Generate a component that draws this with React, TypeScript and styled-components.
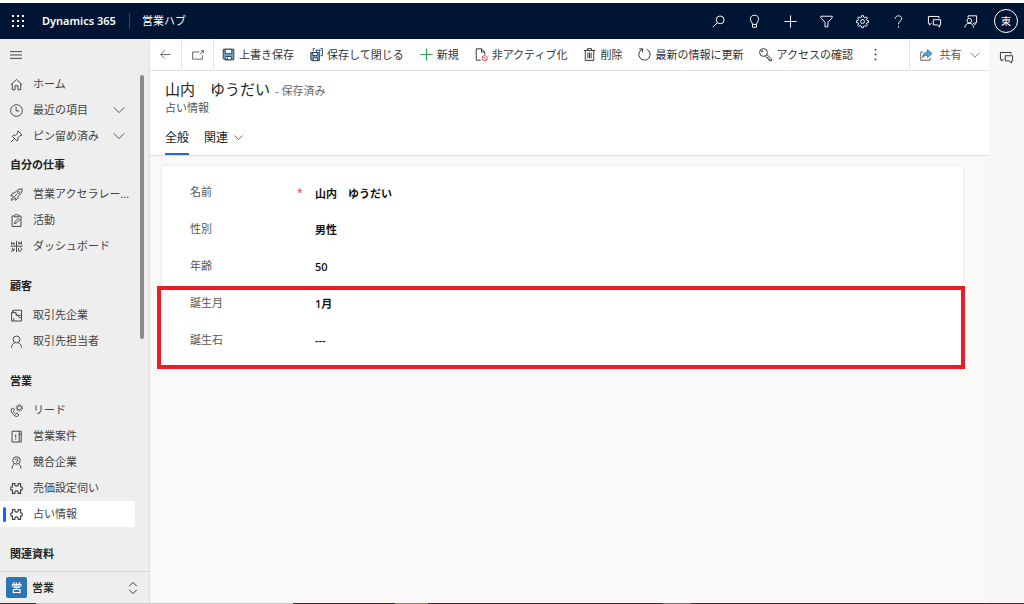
import React from "react";
import styled, { createGlobalStyle } from "styled-components";

const GlobalStyle = createGlobalStyle`
  *, *::before, *::after { box-sizing: border-box; }
  body {
    margin: 0;
    background: #faf9f8;
    color: #333;
    font-family: "Open Sans", "Noto Sans CJK JP", sans-serif;
    font-size: 11px;
    line-height: 16px;
  }
  button, input, select { font: inherit; color: inherit; }
  button { background: none; border: 0; padding: 0; cursor: pointer; white-space: nowrap; }
  a { color: inherit; text-decoration: none; }
  h1, h2, p, ul { margin: 0; padding: 0; font-size: inherit; font-weight: inherit; }
  ul { list-style: none; }
`;

/* ---------- icons ---------- */

const Svg = styled.svg<{ $size: number }>`
  width: ${(p) => p.$size}px;
  height: ${(p) => p.$size}px;
  flex: none;
  display: block;
  fill: none;
  stroke: currentColor;
  stroke-width: 1.2;
  overflow: visible;
`;

const shapes: Record<string, React.ReactNode> = {
  menu: <path d="M0 3.5h16M0 8h16M0 12.5h16" />,
  home: <path d="M1 8.2 8 1.8l7 6.4M2.8 7v7.4h3.4V9.6h3.6v4.8h3.4V7" />,
  clock: <><circle cx="8" cy="8" r="7.2" /><path d="M7.5 3.5v5h4" /></>,
  pin: <path d="M9.8 1.2l5 5-1.4.7-.8-.2-3 3 .2 2.6-1.2 1.2-5.8-5.8L4 6.5l2.6.2 3-3-.2-.9zM5.6 10.4 1 15" />,
  rocket: <><path d="M15 1c-4 0-6.500 1.500-9 5L3 6.500 1 9.500l3 .3L6.200 12l.3 3 3-2 .5-3c3.500-2.500 5-5 5-9zM4 11.500c-1.500.5-2.200 1.700-2.400 3.500 1.700-.2 2.800-.8 3.400-2.400" /><circle cx="10.500" cy="5.500" r="1.300" /><path d="M5.500 10.500l3-3" /></>,
  clipboard: <path d="M5.500 2.500H2.500v12.800h11V2.500h-3M5.500 1.500c.2-1 4.800-1 5 0v2h-5zM5.500 12l.6-2.600 4-4 1.800 1.700-4 4.100z" />,
  dashboard: <path d="M8 1v14M.5 7.500h15M2 2v3.500M5 3v2.500M11 2v3.500M14 1.500v4M2 4.500h4M10 4h4.500M3 9.500v2.500h2M1.500 13.500c2 1.200 3.500 0 4-3M10.500 10v3.500h3.500M12 9.500c2 0 3 1.500 2.500 3" />,
  account: <path d="M2 14.800V4.500L4 1.500h10.200v13.300zM2 4.500h5.500v3.200h6.700M4 1.500v3M7.500 6l3.500 4 3 1M4.500 14.500v-3" />,
  person: <><circle cx="8" cy="5.500" r="4.200" /><path d="M1.800 15.500c.2-3.500 2.200-5.300 4.200-6M14.200 15.500c-.2-3.500-2.200-5.300-4.200-6" /></>,
  lead: <><path d="M3.500 5 1.500 6.200C.3 8.500 4 14.500 7.800 15.300c1.500.2 2.700-.8 3.200-1.800L8.500 11.300 7 12.200C5.800 11.600 4.500 9.800 4.200 8.600L5.500 7.500z" /><circle cx="11.500" cy="4.800" r="2.500" /><circle cx="11.500" cy="4.800" r="3.900" strokeDasharray="1.600 1.100" /></>,
  opportunity: <path d="M2.500 1.500h8.800v13.300H2.500zM11.300 1.500h2.500v4h-2.500M13.800 5.500v9.300h-2.500M7 5.500v4M7 10.700v1.300" />,
  competitor: <><circle cx="8" cy="5.500" r="4.600" /><path d="M6.300 4.800c0-2 3.400-2 3.400 0 0 1.400-1.700 1.200-1.700 2.600M8 8v.8M2.500 15.500c0-2.500 1-4.500 3-6M13.500 15.500c0-2.500-1-4.500-3-6" /></>,
  puzzle: <path strokeWidth="1.400" d="M3 2h3c-.5 2 .5 3 2 3s2.500-1 2-3h3v4c3-.5 3 4.500 0 4v4h-3c.5-2-.5-3-2-3s-2.500 1-2 3H3v-4c-3 .5-3-4.500 0-4z" />,
  chevron: <path d="M1 4.500l7 7 7-7" />,
  updown: <path d="M3 5.500 8 .5l5 5M3 10.500l5 5 5-5" />,
  back: <path d="M15.500 8H1M7 2 1 8l6 6" />,
  popout: <path d="M9.500 4H.8v9.500h13V8.500M10.500 7l4.500-4.500M12 2.200h3.300v3.300" />,
  save: <><path fill="#6ba7d6" stroke="#333f4d" d="M1.500 1.500h13v13H3L1.500 13z" /><path fill="#fff" stroke="#333f4d" d="M4 1.500h8v5.500H4zM4.500 10.500h7v4h-7z" /><path stroke="#333f4d" d="M6.800 12v2.500" /></>,
  saveClose: <><path fill="#7fa5c2" stroke="#333f4d" d="M1 5.500h10.500v10H2.500L1 14.500z" /><path fill="#fff" stroke="#333f4d" d="M3.500 5.500h5.500v3.800H3.500zM4 12h5v3.500H4z" /><path stroke="#333f4d" d="M4 3.500V.5h2M13 .5h2.200v9H13" /><path stroke="#2376c4" d="M7 3h6M9 1 7 3l2 2M11 1l2 2-2 2" /></>,
  add: <path stroke="#2ea65a" strokeWidth="1.500" d="M8 .5v15M.5 8h15" />,
  deactivate: <><path d="M7 15H1.500V1H8l4 4v3M8 1v4h4" /><g stroke="#e8474f"><circle cx="12" cy="12.500" r="3.200" /><path d="M9.800 10.300l4.400 4.400" /></g></>,
  trash: <path d="M1 3h14M5.500 3V.8h5V3M2.800 3v12.300h10.400V3M6 5.500v7.300M8 5.500v7.300M10 5.500v7.300" />,
  refresh: <path d="M5.300 1.500A7 7 0 1 0 10.700 1.500M1.500 1h4v4.200" />,
  key: <><circle cx="5.500" cy="5.500" r="4.800" /><circle cx="4" cy="4" r=".8" /><path d="M9.500 8l6 5.500v2h-2.800v-1.800H11v-1.800H9.500L7.800 10" /></>,
  more: <g fill="currentColor" stroke="none"><circle cx="8" cy="2" r="1.100" /><circle cx="8" cy="8" r="1.100" /><circle cx="8" cy="14" r="1.100" /></g>,
  share: <><path d="M4.500 4H1v11h12.500v-3.500" /><path fill="#58a5e0" stroke="#1f6fb8" d="M10 1l6 5-6 5V8.200C7 8 5 9 3.500 11.500 4 7 6 4.200 10 4z" /></>,
  search: <><circle cx="10" cy="6" r="4.800" /><path d="M6.500 9.500 1 15" /></>,
  bulb: <path d="M5.500 11.500C5.500 9 3 8.500 3 5.300a5 5 0 0 1 10 0c0 3.200-2.500 3.700-2.500 6.200zM5.500 11.500V15h5v-3.500" />,
  plus: <path d="M8 .5v15M.5 8h15" />,
  filter: <path d="M1 1.500h14v1.800L9.800 9v5.500H6.200V9L1 3.300z" />,
  gear: <><circle cx="8" cy="8" r="2.400" /><path d="M6.900.8h2.200l.4 2 1.300.6 1.700-1.200 1.500 1.500-1.200 1.700.6 1.300 2 .4v2.200l-2 .4-.6 1.300 1.200 1.700-1.500 1.500-1.700-1.200-1.300.6-.4 2H6.900l-.4-2-1.300-.6-1.700 1.200L2 12.700 3.200 11l-.6-1.300-2-.4V7.100l2-.4.600-1.300L2 3.700l1.500-1.500 1.700 1.200 1.300-.6z" /></>,
  help: <path d="M4 4.500C4 -.2 12 -.2 12 4.500 12 7.500 8 7.500 8 11.500M8 13.700v1.800" />,
  chat: <path d="M4.500 10.200H4l-2.300 2.300v-2.300H.5V1.800h13V4M6.500 5.800h9v6.400H14v2.600l-2.600-2.600H6.500z" />,
  contact: <><path d="M5 3.500V1h10.500v8.500h-2v2.500L11 9.500" /><circle cx="6.500" cy="7" r="2.800" /><path d="M1 15.500c.3-3.500 2.500-5.300 5.500-5.300s5 1.800 5.300 5.300" /></>,
};

const Icon = ({ name, size = 13 }: { name: string; size?: number }) => (
  <Svg viewBox="0 0 16 16" $size={size} aria-hidden="true">{shapes[name]}</Svg>
);

/* ---------- frame ---------- */

const Page = styled.div`
  min-height: 100vh;
  display: flex;
  flex-direction: column;
  border-top: 3px solid #fff;
`;

const TopBar = styled.header`
  height: 36px;
  display: flex;
  align-items: center;
  background: #001433;
  color: #fff;
`;

const TopButton = styled.button`
  width: 36px;
  height: 36px;
  display: grid;
  place-items: center;
`;

const Brand = styled.span`
  padding: 0 13px 0 6px;
  font-family: "Noto Sans", sans-serif;
  font-weight: 600;
`;

const AppName = styled.span`
  padding-left: 12px;
  border-left: 1px solid #33435c;
`;

const TopActions = styled.div`
  display: flex;
  margin-left: auto;
`;

const Avatar = styled.span`
  width: 24px;
  height: 24px;
  display: grid;
  place-items: center;
  border: 1px solid #fff;
  border-radius: 50%;
  font-size: 10px;
`;

const Columns = styled.div`
  flex: 1;
  display: flex;
`;

const TaskbarEdge = styled.div`
  height: 1px;
  background: linear-gradient(
    90deg,
    #3a2d2f 0 3.5%, #c9c9c9 3.5% 28.6%, #3a2d2f 28.6% 38.6%,
    #b87a45 38.6% 41.8%, #3a2d2f 41.8% 64.7%, #7d7375 64.7% 67.500%, #3a2d2f 67.500%
  );
`;

/* ---------- site map ---------- */

const Sidebar = styled.nav`
  position: relative;
  width: 150px;
  flex: none;
  display: flex;
  flex-direction: column;
  background: #eee;
  border-right: 1px solid #e0e0e0;
`;

const MenuButton = styled.button`
  width: 32px;
  height: 32px;
  display: grid;
  place-items: center;
`;

const NavGroup = styled.section`
  & + & + & { margin-top: 11px; }
`;

const GroupTitle = styled.h2`
  padding: 8px 10px;
  color: #222;
  font-weight: 700;
`;

const NavLink = styled.a<{ $active?: boolean }>`
  position: relative;
  height: 26px;
  margin-right: 14px;
  padding-left: 10px;
  display: flex;
  align-items: center;
  gap: 10px;
  color: #444;
  background: ${(p) => (p.$active ? "#fff" : "transparent")};

  &::before {
    content: "";
    display: ${(p) => (p.$active ? "block" : "none")};
    position: absolute;
    left: 3px;
    top: 6px;
    bottom: 5px;
    width: 3px;
    border-radius: 2px;
    background: #0f62fe;
  }
`;

const NavText = styled.span`
  flex: 1;
  white-space: nowrap;
`;

const Expander = styled.span`
  margin-right: 10px;
`;

const ScrollThumb = styled.div`
  position: absolute;
  top: 36px;
  right: 5px;
  width: 4px;
  height: 264px;
  border-radius: 2px;
  background: #8a8a8a;
`;

const AreaSwitch = styled.button`
  height: 32px;
  margin-top: auto;
  padding: 0 10px 0 6px;
  display: flex;
  align-items: center;
  gap: 5px;
  border-top: 1px solid #d6d6d6;
  color: #222;
  font-weight: 500;
  text-align: left;
`;

const AreaBadge = styled.span`
  width: 21px;
  height: 21px;
  display: grid;
  place-items: center;
  border-radius: 2px;
  background: #2a76b5;
  color: #fff;
`;

/* ---------- record ---------- */

const Main = styled.main`
  flex: 1;
  min-width: 0;
  display: flex;
  flex-direction: column;
`;

const CommandBar = styled.div`
  height: 32px;
  display: flex;
  background: #fff;
  border-bottom: 1px solid #e1e1e1;
`;

const SquareButton = styled.button`
  width: 32px;
  display: grid;
  place-items: center;
  border-right: 1px solid #e1e1e1;
  color: #555;
`;

const Commands = styled.div`
  flex: 1;
  display: flex;
  align-items: center;
  gap: 16px;
  padding-left: 8px;
`;

const Command = styled.button`
  display: flex;
  align-items: center;
  gap: 4px;
`;

const ShareButton = styled.button`
  width: 80px;
  display: flex;
  align-items: center;
  justify-content: center;
  gap: 8px;
  border-left: 1px solid #e1e1e1;
  color: #555;
`;

const RecordHeader = styled.div`
  padding: 9px 15px 0;
  background: #fff;
  border-bottom: 1px solid #e1e1e1;
`;

const TitleRow = styled.div`
  display: flex;
  align-items: baseline;
  gap: 5px;
  line-height: 18px;
  color: #666;
`;

const Title = styled.h1`
  font-size: 15px;
  color: #222;
`;

const Entity = styled.p`
  color: #555;
`;

const Tabs = styled.div`
  display: flex;
  gap: 15px;
  margin-top: 8px;
`;

const Tab = styled.button<{ $active?: boolean }>`
  height: 31px;
  padding-bottom: 2px;
  display: flex;
  align-items: center;
  gap: 6px;
  border-bottom: 2px solid ${(p) => (p.$active ? "#2266e3" : "transparent")};
  color: #222;
  font-size: 12px;
`;

const Card = styled.form`
  position: relative;
  margin: 10px 26px 0 12px;
  padding: 7px 28px 8px;
  border-radius: 3px;
  background: #fff;
  box-shadow: 0 0 3px rgba(0, 0, 0, 0.12);
`;

const Field = styled.div`
  height: 37px;
  display: grid;
  grid-template-columns: 107px 18px 1fr;
  align-items: center;
`;

const Label = styled.label`
  color: #555;
`;

const Required = styled.span`
  color: #e8333c;
  font-size: 10px;
`;

const TextValue = styled.input`
  width: 100%;
  height: 18px;
  margin-top: 2px;
  padding: 0;
  border: 0;
  outline: 0;
  background: none;
  color: #111;
  font-weight: 600;
`;

const SelectValue = styled(TextValue).attrs({ as: "select" })`
  appearance: none;
`;

const Highlight = styled.div`
  position: absolute;
  top: 120px;
  bottom: -3px;
  left: -5px;
  right: -2px;
  border: 4px solid #ed1c24;
  pointer-events: none;
`;

const SideRail = styled.aside`
  width: 35px;
  flex: none;
  background: #f8f7f5;
`;

const RailButton = styled.button`
  width: 35px;
  height: 36px;
  display: grid;
  place-items: center;
`;

/* ---------- data ---------- */

type NavEntry = { icon: string; text: string; expands?: boolean; active?: boolean };

const groups: { title?: string; items: NavEntry[] }[] = [
  {
    items: [
      { icon: "home", text: "ホーム" },
      { icon: "clock", text: "最近の項目", expands: true },
      { icon: "pin", text: "ピン留め済み", expands: true },
    ],
  },
  {
    title: "自分の仕事",
    items: [
      { icon: "rocket", text: "営業アクセラレー..." },
      { icon: "clipboard", text: "活動" },
      { icon: "dashboard", text: "ダッシュボード" },
    ],
  },
  {
    title: "顧客",
    items: [
      { icon: "account", text: "取引先企業" },
      { icon: "person", text: "取引先担当者" },
    ],
  },
  {
    title: "営業",
    items: [
      { icon: "lead", text: "リード" },
      { icon: "opportunity", text: "営業案件" },
      { icon: "competitor", text: "競合企業" },
      { icon: "puzzle", text: "売価設定伺い" },
      { icon: "puzzle", text: "占い情報", active: true },
    ],
  },
  { title: "関連資料", items: [] },
];

const topIcons = [
  ["search", "検索"],
  ["bulb", "ヒント"],
  ["plus", "新規作成"],
  ["filter", "フィルター"],
  ["gear", "設定"],
  ["help", "ヘルプ"],
  ["chat", "チャット"],
  ["contact", "アシスタント"],
];

const commands = [
  ["save", "上書き保存"],
  ["saveClose", "保存して閉じる"],
  ["add", "新規"],
  ["deactivate", "非アクティブ化"],
  ["trash", "削除"],
  ["refresh", "最新の情報に更新"],
  ["key", "アクセスの確認"],
];

const fields = [
  { id: "name", label: "名前", value: "山内　ゆうだい", required: true },
  { id: "gender", label: "性別", value: "男性", choice: true },
  { id: "age", label: "年齢", value: "50" },
  { id: "month", label: "誕生月", value: "1月", choice: true },
  { id: "stone", label: "誕生石", value: "---" },
];

export default function App() {
  return (
    <Page>
      <GlobalStyle />
      <TopBar>
        <TopButton aria-label="アプリ一覧">
          <Svg viewBox="0 0 12 12" $size={12} aria-hidden="true">
            <path stroke="#fff" strokeWidth="2" strokeDasharray="2 3" d="M0 1h12M0 6h12M0 11h12" />
          </Svg>
        </TopButton>
        <Brand>Dynamics 365</Brand>
        <AppName>営業ハブ</AppName>
        <TopActions>
          {topIcons.map(([icon, label]) => (
            <TopButton key={icon} aria-label={label}><Icon name={icon} /></TopButton>
          ))}
          <TopButton><Avatar>東</Avatar></TopButton>
        </TopActions>
      </TopBar>

      <Columns>
        <Sidebar>
          <MenuButton aria-label="サイトマップ"><Icon name="menu" size={12} /></MenuButton>
          {groups.map((group, i) => (
            <NavGroup key={i}>
              {group.title && <GroupTitle>{group.title}</GroupTitle>}
              <ul>
                {group.items.map((item) => (
                  <li key={item.text}>
                    <NavLink href="#" $active={item.active}>
                      <Icon name={item.icon} />
                      <NavText>{item.text}</NavText>
                      {item.expands && <Expander><Icon name="chevron" size={12} /></Expander>}
                    </NavLink>
                  </li>
                ))}
              </ul>
            </NavGroup>
          ))}
          <ScrollThumb />
          <AreaSwitch>
            <AreaBadge>営</AreaBadge>
            <NavText>営業</NavText>
            <Icon name="updown" size={12} />
          </AreaSwitch>
        </Sidebar>

        <Main>
          <CommandBar>
            <SquareButton aria-label="戻る"><Icon name="back" size={11} /></SquareButton>
            <SquareButton aria-label="新しいウィンドウで開く"><Icon name="popout" size={12} /></SquareButton>
            <Commands>
              {commands.map(([icon, label]) => (
                <Command key={icon}><Icon name={icon} />{label}</Command>
              ))}
              <Command aria-label="その他"><Icon name="more" /></Command>
            </Commands>
            <ShareButton>
              <Icon name="share" size={12} />共有<Icon name="chevron" size={10} />
            </ShareButton>
          </CommandBar>

          <RecordHeader>
            <TitleRow>
              <Title>山内　ゆうだい</Title>
              <span>- 保存済み</span>
            </TitleRow>
            <Entity>占い情報</Entity>
            <Tabs>
              <Tab $active>全般</Tab>
              <Tab>関連<Icon name="chevron" size={9} /></Tab>
            </Tabs>
          </RecordHeader>

          <Card>
            {fields.map((f) => (
              <Field key={f.id}>
                <Label htmlFor={f.id}>{f.label}</Label>
                <Required>{f.required ? "*" : ""}</Required>
                {f.choice ? (
                  <SelectValue id={f.id}><option>{f.value}</option></SelectValue>
                ) : (
                  <TextValue id={f.id} defaultValue={f.value} />
                )}
              </Field>
            ))}
            <Highlight />
          </Card>
        </Main>

        <SideRail>
          <RailButton aria-label="チャット"><Icon name="chat" /></RailButton>
        </SideRail>
      </Columns>
      <TaskbarEdge />
    </Page>
  );
}
